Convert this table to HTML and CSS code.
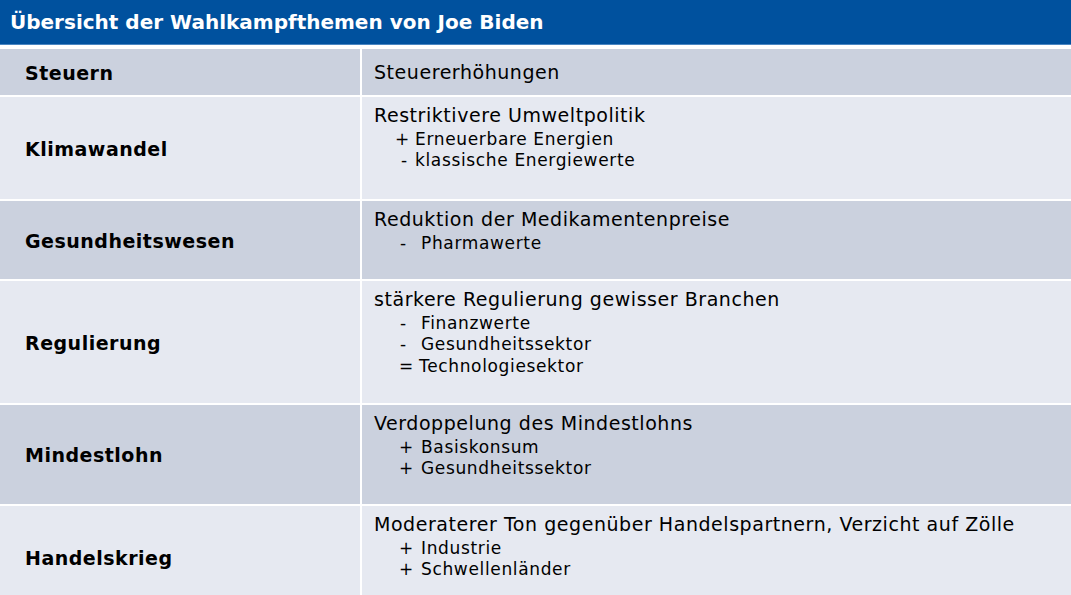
FILE: index.html
```html
<!DOCTYPE html>
<html lang="de">
<head>
<meta charset="utf-8">
<title>Übersicht der Wahlkampfthemen von Joe Biden</title>
<link rel="stylesheet" href="styles.css">
</head>
<body>
<div class="page">
  <header class="title">Übersicht der Wahlkampfthemen von Joe Biden</header>
  <div class="table">
    <div class="cell key dark r1">Steuern</div>
    <div class="cell val dark r1 single"><div class="main">Steuererhöhungen</div></div>

    <div class="cell key light r2">Klimawandel</div>
    <div class="cell val light r2">
      <div class="main">Restriktivere Umweltpolitik</div>
      <div class="sub s-a"><span class="mk">+</span><span>Erneuerbare Energien</span></div>
      <div class="sub s-b"><span class="mk">-</span><span>klassische Energiewerte</span></div>
    </div>

    <div class="cell key dark r3">Gesundheitswesen</div>
    <div class="cell val dark r3">
      <div class="main">Reduktion der Medikamentenpreise</div>
      <div class="sub s-c"><span class="mk">-</span><span>Pharmawerte</span></div>
    </div>

    <div class="cell key light r4">Regulierung</div>
    <div class="cell val light r4">
      <div class="main">stärkere Regulierung gewisser Branchen</div>
      <div class="sub s-c"><span class="mk">-</span><span>Finanzwerte</span></div>
      <div class="sub s-c"><span class="mk">-</span><span>Gesundheitssektor</span></div>
      <div class="sub s-d"><span class="mk">=</span><span>Technologiesektor</span></div>
    </div>

    <div class="cell key dark r5">Mindestlohn</div>
    <div class="cell val dark r5">
      <div class="main">Verdoppelung des Mindestlohns</div>
      <div class="sub s-e"><span class="mk">+</span><span>Basiskonsum</span></div>
      <div class="sub s-e"><span class="mk">+</span><span>Gesundheitssektor</span></div>
    </div>

    <div class="cell key light r6">Handelskrieg</div>
    <div class="cell val light r6">
      <div class="main">Moderaterer Ton gegenüber Handelspartnern, Verzicht auf Zölle</div>
      <div class="sub s-e"><span class="mk">+</span><span>Industrie</span></div>
      <div class="sub s-e"><span class="mk">+</span><span>Schwellenländer</span></div>
    </div>
  </div>
</div>
</body>
</html>
```

FILE: styles.css
```css
html, body {
  margin: 0;
  padding: 0;
  background: #ffffff;
}
body {
  width: 1071px;
  height: 595px;
  overflow: hidden;
  font-family: "DejaVu Sans", Verdana, sans-serif;
  color: #000000;
}
.page {
  display: flex;
  flex-direction: column;
}
.title {
  box-sizing: border-box;
  height: 45px;
  background: #00519e;
  color: #ffffff;
  font-weight: bold;
  font-size: 20px;
  line-height: 44px;
  padding-left: 10px;
  border-bottom: 1px solid #4a86c2;
}
.table {
  margin-top: 4px;
  display: grid;
  grid-template-columns: 360px 1fr;
  grid-template-rows: 46px 102px 78px 122px 99px 102px;
  column-gap: 2px;
  row-gap: 2px;
  background: #ffffff;
}
.cell {
  box-sizing: border-box;
}
.dark { background: #cbd1de; }
.light { background: #e6e9f1; }
.key {
  display: flex;
  align-items: center;
  padding-left: 25px;
  padding-top: 1px;
  font-weight: bold;
  font-size: 19px;
  letter-spacing: 0.5px;
}
.val {
  padding-left: 12px;
  padding-top: 4.5px;
}
.val.single {
  display: flex;
  align-items: center;
  padding-top: 0;
}
.main {
  font-size: 19px;
  line-height: 27px;
  letter-spacing: 0.55px;
}
.sub {
  font-size: 17px;
  line-height: 21.5px;
  letter-spacing: 0.65px;
  display: flex;
}
.mk {
  display: inline-block;
}
.s-a { padding-left: 21px; }
.s-a .mk { width: 20px; }
.s-b { padding-left: 27px; }
.s-b .mk { width: 14px; }
.s-c { padding-left: 26px; }
.s-c .mk { width: 21px; }
.s-d { padding-left: 25px; }
.s-d .mk { width: 20px; }
.s-e { padding-left: 25px; }
.s-e .mk { width: 22px; }
```
